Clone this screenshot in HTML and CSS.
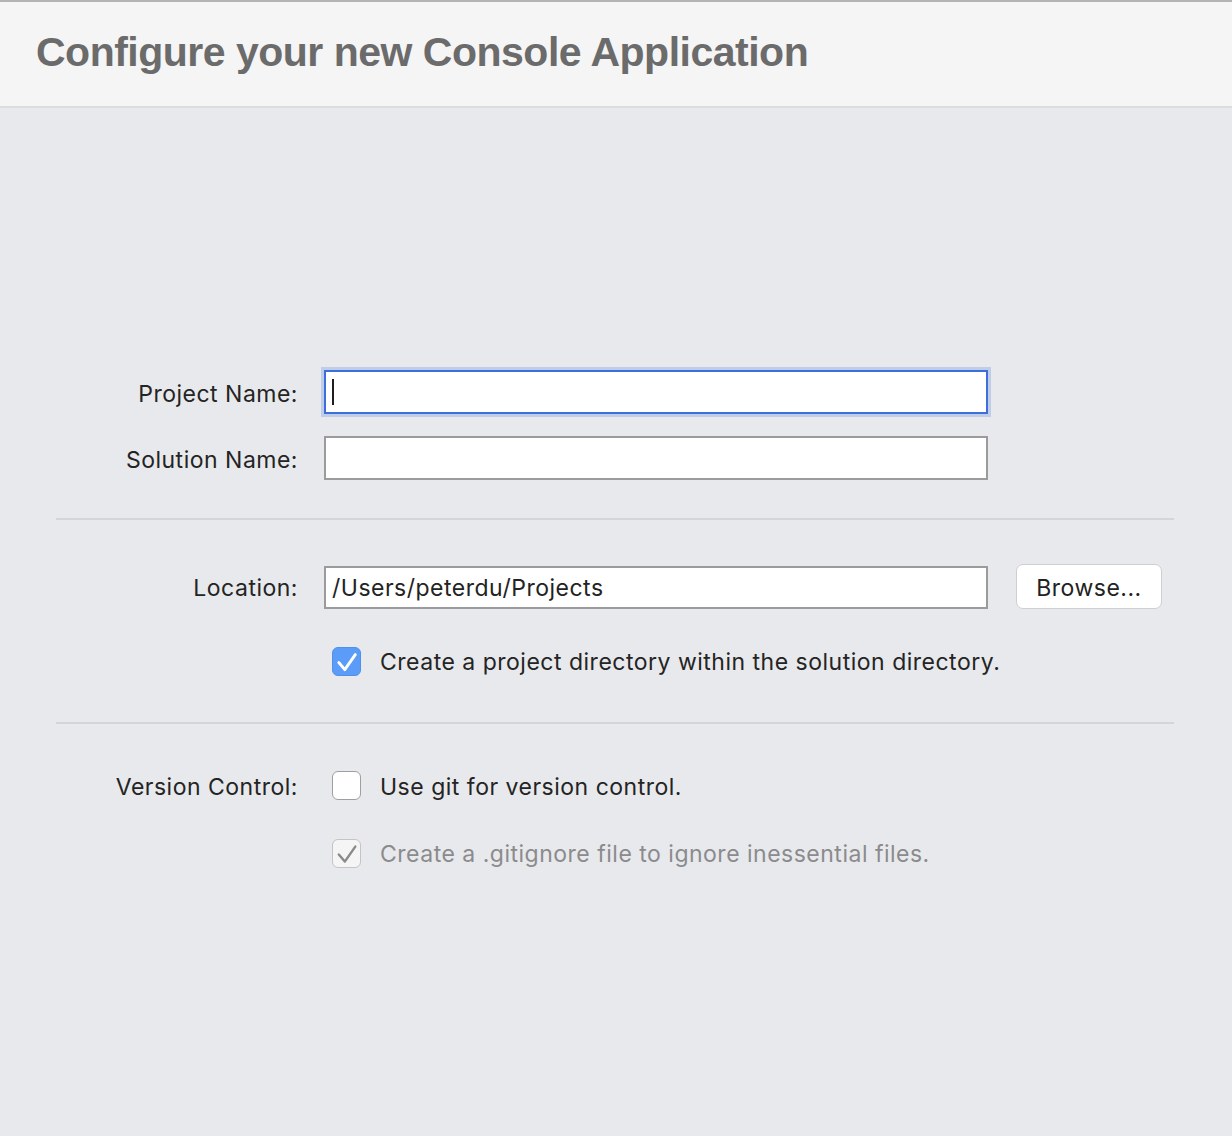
FILE: index.html
```html
<!DOCTYPE html>
<html>
<head>
<meta charset="utf-8">
<link rel="stylesheet" href="styles.css">
</head>
<body>
<header class="header">
  <h1 class="title">Configure your new Console Application</h1>
</header>
<main class="content">
  <section class="group">
    <div class="row">
      <label class="label">Project Name:</label>
      <div class="field focused"><span class="caret"></span></div>
    </div>
    <div class="row">
      <label class="label">Solution Name:</label>
      <div class="field"></div>
    </div>
  </section>
  <hr class="divider">
  <section class="group group-loc">
    <div class="row row-loc">
      <label class="label">Location:</label>
      <div class="field field-loc">/Users/peterdu/Projects</div>
      <button class="browse">Browse...</button>
    </div>
    <div class="row row-check">
      <span class="label"></span>
      <div class="check-line">
        <span class="box checked">
          <svg viewBox="0 0 29 29" width="29" height="29"><polyline points="6.8,15.5 12.8,22.6 23.3,7.6" fill="none" stroke="#fff" stroke-width="2.9" stroke-linecap="round" stroke-linejoin="round"/></svg>
        </span>
        <span class="check-text">Create a project directory within the solution directory.</span>
      </div>
    </div>
  </section>
  <hr class="divider">
  <section class="group group-vc">
    <div class="row row-check">
      <span class="label">Version Control:</span>
      <div class="check-line">
        <span class="box"></span>
        <span class="check-text">Use git for version control.</span>
      </div>
    </div>
    <div class="row row-check row-git">
      <span class="label"></span>
      <div class="check-line disabled">
        <span class="box checked-disabled">
          <svg viewBox="0 0 29 29" width="29" height="29"><polyline points="6.8,15.5 12.8,22.6 23.3,7.6" fill="none" stroke="#8a8a8a" stroke-width="2.4" stroke-linecap="round" stroke-linejoin="round"/></svg>
        </span>
        <span class="check-text">Create a .gitignore file to ignore inessential files.</span>
      </div>
    </div>
  </section>
</main>
</body>
</html>
```

FILE: styles.css
```css
* { box-sizing: border-box; }
html, body {
  margin: 0;
  padding: 0;
}
body {
  width: 1232px;
  height: 1136px;
  overflow: hidden;
  background: #e8e9ec;
  font-family: Inter, "Liberation Sans", sans-serif;
  color: #232323;
}
.header {
  height: 108px;
  background: #f5f5f5;
  border-top: 2px solid #b4b4b4;
  border-bottom: 2px solid #dcdcdc;
  padding-left: 36px;
  display: flex;
  align-items: center;
}
.title {
  margin: 0;
  font-family: "Liberation Sans", Arial, sans-serif;
  font-weight: bold;
  font-size: 41px;
  letter-spacing: -0.5px;
  color: #6b6b6b;
  line-height: 1;
  padding-bottom: 4px;
}
.content {
  padding: 262px 58px 0 56px;
  display: flex;
  flex-direction: column;
}
.group {
  display: flex;
  flex-direction: column;
  gap: 22px;
}
.row {
  display: grid;
  grid-template-columns: 241px 664px 146px;
  column-gap: 27px;
  align-items: center;
  height: 44px;
}
.label {
  text-align: right;
  font-size: 23px;
  letter-spacing: 0.5px;
  color: #242424;
  padding-top: 3px;
  margin-right: -1px;
}
.field {
  height: 44px;
  background: #fff;
  border: 2px solid #9b9b9b;
  display: flex;
  align-items: center;
  padding-left: 6px;
  font-size: 23px;
  letter-spacing: 0.5px;
  color: #232323;
}
.field.focused {
  border-color: #3b6fd9;
  box-shadow: 0 0 0 3px rgba(118, 155, 225, 0.35);
}
.caret {
  width: 2px;
  height: 26px;
  background: #1e1e1e;
  margin-left: 0;
}
.divider {
  margin: 0;
  border: none;
  height: 2px;
  background: #d4d5d8;
}
.group:first-child + .divider { margin-top: 38px; }
.group-loc {
  margin-top: 44px;
  gap: 37px;
}
.row-loc {
  height: 45px;
  column-gap: 0;
  grid-template-columns: 241px 27px 664px 28px 146px;
}
.row-loc .label { grid-column: 1; }
.row-loc .field { grid-column: 3; height: 43px; margin-top: 1px; padding-top: 1px; }
.row-loc .browse { grid-column: 5; }
.browse {
  height: 45px;
  background: #fff;
  border: 1.5px solid #cfcfcf;
  border-radius: 7px;
  font-family: Inter, "Liberation Sans", sans-serif;
  font-size: 23px;
  letter-spacing: 0.5px;
  color: #222;
  padding: 0;
  padding-top: 2px;
}
.row-check {
  height: 29px;
  grid-template-columns: 241px auto;
  column-gap: 35px;
}
.group-loc + .divider { margin-top: 47px; }
.group-vc {
  margin-top: 46px;
  gap: 39px;
}
.check-line {
  display: flex;
  align-items: center;
  gap: 19px;
}
.box {
  width: 29px;
  height: 29px;
  border-radius: 6px;
  background: #fff;
  border: 1px solid #9f9f9f;
  flex: none;
  display: block;
  position: relative;
}
.box svg {
  position: absolute;
  left: -1px;
  top: -1px;
}
.box.checked {
  background: #5a9cf8;
  border-color: #4f90ec;
}
.box.checked-disabled {
  background: #f5f5f6;
  border-color: #c4c4c6;
}
.check-text {
  font-size: 23px;
  letter-spacing: 0.5px;
  color: #242424;
  padding-top: 2px;
}
.disabled .check-text { color: #8b8b8d; }
```
